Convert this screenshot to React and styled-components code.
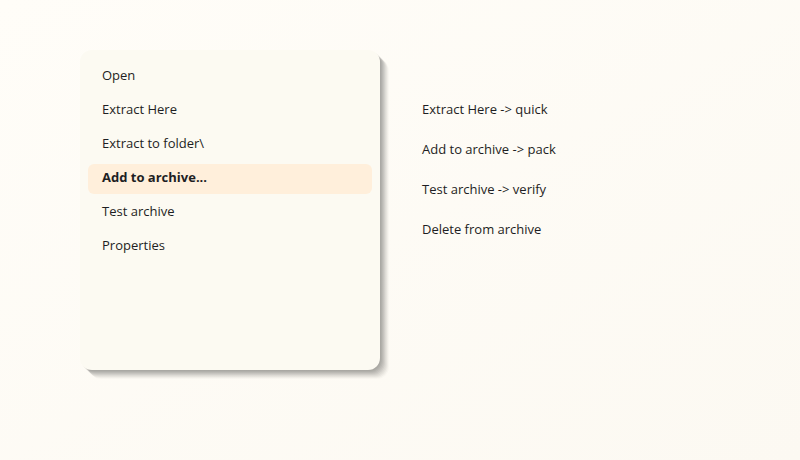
import styled, { createGlobalStyle } from 'styled-components';

const menuItems = [
  { label: 'Open' },
  { label: 'Extract Here' },
  { label: 'Extract to folder\\' },
  { label: 'Add to archive...', active: true },
  { label: 'Test archive' },
  { label: 'Properties' },
];

const hints = [
  'Extract Here -> quick',
  'Add to archive -> pack',
  'Test archive -> verify',
  'Delete from archive',
];

const App = () => {
  return (
    <>
      <GlobalStyle />
      <Page>
        <Menu>
          {menuItems.map((item) => (
            <li key={item.label}>
              <MenuButton type="button" $active={item.active}>
                {item.label}
              </MenuButton>
            </li>
          ))}
        </Menu>
        <HintList>
          {hints.map((hint) => (
            <li key={hint}>{hint}</li>
          ))}
        </HintList>
      </Page>
    </>
  );
};

export default App;

// Styled Components
const GlobalStyle = createGlobalStyle`
  * {
    box-sizing: border-box;
  }

  body {
    margin: 0;
    color: #1e1e23;
    font-family: 'Segoe UI', 'Open Sans', sans-serif;
    font-size: 13px;
    line-height: 18px;
  }
`;

const Page = styled.main`
  display: flex;
  align-items: flex-start;
  gap: 42px;
  min-height: 100vh;
  padding: 50px 80px;
  background: linear-gradient(to bottom right, #fffdf8, #fcf9f2);
`;

const Menu = styled.ul`
  display: flex;
  flex-direction: column;
  flex: 0 1 300px;
  gap: 4px;
  min-height: 320px;
  margin: 0;
  padding: 12px 8px;
  list-style: none;
  background-color: #fcfaf2;
  border-radius: 12px;
  /* Stacked copies give the hard diagonal edge */
  box-shadow:
    1px 1px 0 rgba(0, 0, 0, 0.04),
    2px 2px 0 rgba(0, 0, 0, 0.05),
    3px 3px 0 rgba(0, 0, 0, 0.05),
    4px 4px 0 rgba(0, 0, 0, 0.05),
    5px 5px 0 rgba(0, 0, 0, 0.05),
    6px 6px 0 rgba(0, 0, 0, 0.04),
    7px 7px 0 rgba(0, 0, 0, 0.04),
    8px 8px 0 rgba(0, 0, 0, 0.03),
    9px 9px 0 rgba(0, 0, 0, 0.02);
`;

const MenuButton = styled.button`
  display: block;
  width: 100%;
  padding: 4px 14px 8px;
  border: 0;
  border-radius: 6px;
  background-color: ${({ $active }) => ($active ? '#ffefdb' : 'transparent')};
  color: inherit;
  font: inherit;
  font-weight: ${({ $active }) => ($active ? 700 : 400)};
  text-align: left;
`;

const HintList = styled.ul`
  display: flex;
  flex-direction: column;
  flex: 1;
  gap: 22px;
  margin: 0;
  padding: 50px 0 0;
  list-style: none;
`;
